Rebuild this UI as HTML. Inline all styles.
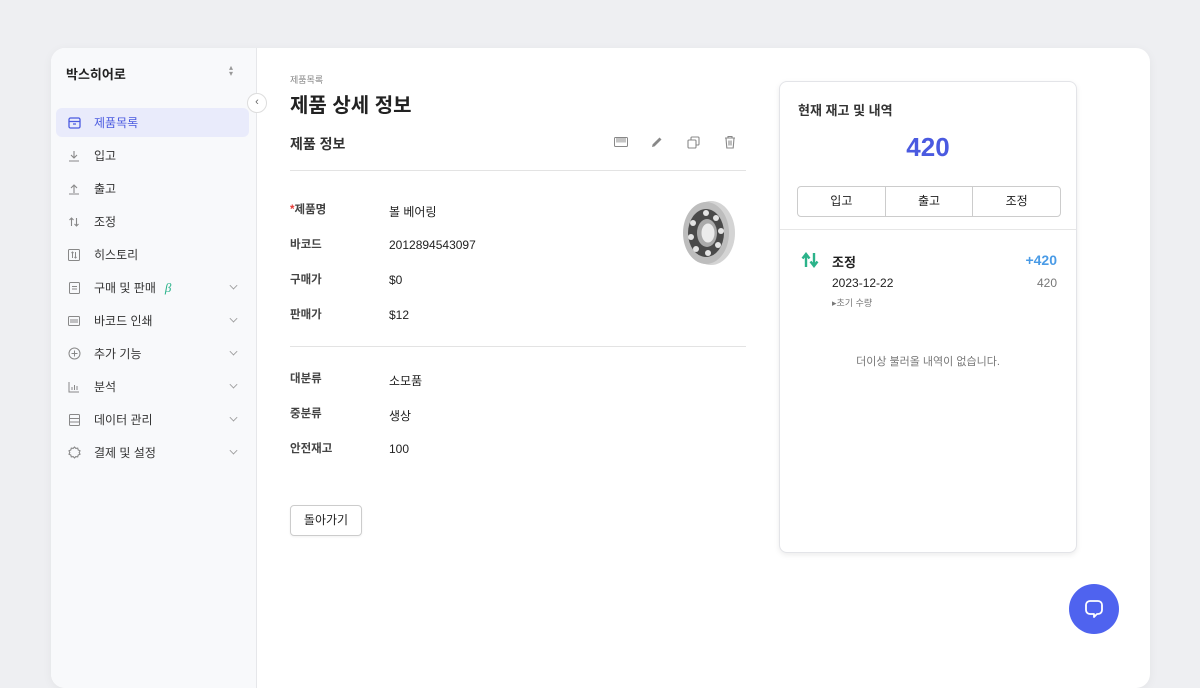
<!DOCTYPE html>
<html><head><meta charset="utf-8"><style>
*{box-sizing:border-box;margin:0;padding:0}
body{width:1200px;height:660px;background:#eeeff2;font-family:"Liberation Sans","Noto Sans CJK KR",sans-serif;color:#222;position:relative;overflow:hidden}
.app{position:absolute;left:51px;top:48px;width:1099px;height:640px;background:#fff;border-radius:14px;overflow:hidden;box-shadow:0 2px 10px rgba(0,0,0,.05)}
.side{position:absolute;left:0;top:0;width:206px;height:100%;background:#f8f9fb;border-right:1px solid #e6e7ea}
.brand{position:absolute;left:15px;top:16px;font-size:13px;font-weight:700}
.sort{position:absolute;left:178px;top:17px;font-size:8px;color:#999;line-height:6px}
.item{position:absolute;left:5px;width:193px;height:29px;border-radius:6px;font-size:12px;display:flex;align-items:center;padding-left:11px;color:#333}
.item .ic{width:14px;height:14px;margin-right:13px;display:flex;align-items:center;justify-content:center;color:#888}
.item.on{background:#e9ebfb;color:#4a5ae0}
.item.on .ic{color:#4a5ae0}
.chev{position:absolute;right:12px;top:9px;width:7px;height:7px;border-right:1.2px solid #999;border-bottom:1.2px solid #999;transform:rotate(45deg) scale(.8)}
.coll{position:absolute;left:196px;top:45px;width:20px;height:20px;border:1px solid #ddd;border-radius:50%;background:#fff;font-size:11px;color:#666;text-align:center;line-height:17px}
.abs{position:absolute}
.lbl{position:absolute;font-size:11.5px;font-weight:700;color:#444}
.val{position:absolute;font-size:12px;color:#222}
.card{position:absolute;left:728px;top:33px;width:298px;height:472px;border:1px solid #e3e4e8;border-radius:8px;box-shadow:0 2px 6px rgba(0,0,0,.08);background:#fff}
.btns{position:absolute;left:17px;top:104px;width:264px;height:31px;border:1px solid #ccc;border-radius:4px;display:flex}
.btns div{flex:1;text-align:center;line-height:29px;font-size:12px;border-right:1px solid #ccc}
.btns div:last-child{border-right:none}
</style></head><body>
<div class="app">
 <div class="side">
  <div class="brand">박스히어로</div>
  <div class="sort">▴<br>▾</div>
  <div class="item on" style="top:60px"><span class="ic"><svg width="13" height="12" viewBox="0 0 13 12" fill="none" stroke="currentColor" stroke-width="1.3"><rect x="1" y="1" width="11" height="10" rx="1.5"/><path d="M1 4.5h11M5 7h3"/></svg></span>제품목록</div>
  <div class="item" style="top:93px"><span class="ic"><svg width="12" height="12" fill="none" stroke="currentColor" stroke-width="1.1"><path d="M6 1v7M3 5l3 3 3-3M1 11h10"/></svg></span>입고</div>
  <div class="item" style="top:126px"><span class="ic"><svg width="12" height="12" fill="none" stroke="currentColor" stroke-width="1.1"><path d="M6 10V3M3 5l3-3 3 3M1 11h10"/></svg></span>출고</div>
  <div class="item" style="top:159px"><span class="ic"><svg width="12" height="12" fill="none" stroke="currentColor" stroke-width="1.1"><path d="M3.5 10V2M1.5 4l2-2 2 2M8.5 2v8M6.5 8l2 2 2-2"/></svg></span>조정</div>
  <div class="item" style="top:192px"><span class="ic"><svg width="12" height="12" fill="none" stroke="currentColor" stroke-width="1"><rect x=".5" y=".5" width="11" height="11" rx="1"/><path d="M4.5 9V3M3.5 4l1-1 1 1M7.5 3v6M6.5 8l1 1 1-1"/></svg></span>히스토리</div>
  <div class="item" style="top:225px"><span class="ic"><svg width="11" height="12" fill="none" stroke="currentColor" stroke-width="1"><rect x=".5" y=".5" width="10" height="11" rx="1"/><path d="M3 4.5h5M3 7h5"/></svg></span>구매 및 판매<span style="color:#2bb38a;font-style:italic;font-family:'Liberation Serif',serif;margin-left:9px;font-size:13px">β</span><span class="chev"></span></div>
  <div class="item" style="top:258px"><span class="ic"><svg width="12" height="10" fill="none" stroke="currentColor" stroke-width="1"><rect x=".5" y=".5" width="11" height="9" rx="1"/><path d="M3 3v4M5 3v4M7 3v4M9 3v4"/></svg></span>바코드 인쇄<span class="chev"></span></div>
  <div class="item" style="top:291px"><span class="ic"><svg width="13" height="13" fill="none" stroke="currentColor" stroke-width="1"><circle cx="6.5" cy="6.5" r="5.5"/><path d="M6.5 3.5v6M3.5 6.5h6"/></svg></span>추가 기능<span class="chev"></span></div>
  <div class="item" style="top:324px"><span class="ic"><svg width="12" height="12" fill="none" stroke="currentColor" stroke-width="1"><path d="M1 1v10h10M4 9V6M6.5 9V4M9 9V5"/></svg></span>분석<span class="chev"></span></div>
  <div class="item" style="top:357px"><span class="ic"><svg width="11" height="12" fill="none" stroke="currentColor" stroke-width="1"><rect x=".5" y=".5" width="10" height="11" rx="1"/><path d="M.5 4.5h10M.5 8h10"/></svg></span>데이터 관리<span class="chev"></span></div>
  <div class="item" style="top:390px"><span class="ic"><svg width="13" height="13" fill="none" stroke="currentColor" stroke-width="1.1"><path d="M6.5 1l1.3 1.4 1.9-.3.5 1.9 1.8.8-.8 1.7.8 1.7-1.8.8-.5 1.9-1.9-.3L6.5 12 5.2 10.6l-1.9.3-.5-1.9L1 8.2 1.8 6.5 1 4.8 2.8 4l.5-1.9 1.9.3z"/></svg></span>결제 및 설정<span class="chev"></span></div>
 </div>
 <div class="coll">‹</div>

 <div class="abs" style="left:239px;top:25px;font-size:9px;color:#888">제품목록</div>
 <div class="abs" style="left:239px;top:41px;font-size:20px;font-weight:700;color:#222">제품 상세 정보</div>
 <div class="abs" style="left:239px;top:86px;font-size:14px;font-weight:700;color:#333">제품 정보</div>
 <svg class="abs" style="left:563px;top:88px" width="14" height="12" fill="none" stroke="#888" stroke-width="1"><rect x=".5" y="1.5" width="13" height="9" rx="1"/><path d="M3 1.5v5M5 1.5v5M7 1.5v5M9 1.5v5M11 1.5v5"/></svg>
 <svg class="abs" style="left:600px;top:88px" width="12" height="12" fill="#888"><path d="M1 11l.6-2.6L8.5 1.5l2 2L3.6 10.4z"/></svg>
 <svg class="abs" style="left:636px;top:88px" width="13" height="13" fill="none" stroke="#888" stroke-width="1.1"><rect x="1" y="4" width="8" height="8" rx="1"/><path d="M4 4V2a1 1 0 011-1h6a1 1 0 011 1v6a1 1 0 01-1 1H9"/></svg>
 <svg class="abs" style="left:673px;top:87px" width="12" height="14" fill="none" stroke="#888" stroke-width="1.1"><path d="M1 3h10M4 3V1.5h4V3M2 3l.8 10h6.4L10 3M5 5.5v5M7 5.5v5"/></svg>
 <div class="abs" style="left:239px;top:122px;width:456px;height:1px;background:#e3e3e3"></div>
 <div class="lbl" style="left:239px;top:153px"><span style="color:#e53935">*</span>제품명</div><div class="val" style="left:338px;top:155px">볼 베어링</div>
 <div class="lbl" style="left:239px;top:188px">바코드</div><div class="val" style="left:338px;top:190px">2012894543097</div>
 <div class="lbl" style="left:239px;top:223px">구매가</div><div class="val" style="left:338px;top:225px">$0</div>
 <div class="lbl" style="left:239px;top:258px">판매가</div><div class="val" style="left:338px;top:260px">$12</div>
 <svg class="abs" style="left:624px;top:150px" width="64" height="70" viewBox="0 0 64 70">
  <ellipse cx="36" cy="35" rx="24" ry="32" fill="#d4d4d4"/>
  <ellipse cx="31" cy="35" rx="23" ry="31" fill="#bdbdbd"/>
  <ellipse cx="31" cy="35" rx="18" ry="24" fill="#4a4a4a"/>
  <g fill="#e4e4e4"><circle cx="31" cy="15" r="3"/><circle cx="41" cy="20" r="3"/><circle cx="46" cy="33" r="3"/><circle cx="43" cy="47" r="3"/><circle cx="33" cy="55" r="3"/><circle cx="21" cy="51" r="3"/><circle cx="16" cy="39" r="3"/><circle cx="18" cy="25" r="3"/></g>
  <ellipse cx="32" cy="35" rx="10" ry="14" fill="#aaa"/><ellipse cx="33" cy="35" rx="6.5" ry="9.5" fill="#ececec"/>
 </svg>
 <div class="abs" style="left:239px;top:298px;width:456px;height:1px;background:#e3e3e3"></div>
 <div class="lbl" style="left:239px;top:322px">대분류</div><div class="val" style="left:338px;top:324px">소모품</div>
 <div class="lbl" style="left:239px;top:357px">중분류</div><div class="val" style="left:338px;top:359px">생상</div>
 <div class="lbl" style="left:239px;top:392px">안전재고</div><div class="val" style="left:338px;top:394px">100</div>
 <div class="abs" style="left:239px;top:457px;width:72px;height:31px;border:1px solid #ccc;border-radius:4px;font-size:12px;text-align:center;line-height:29px;box-shadow:0 1px 2px rgba(0,0,0,.06)">돌아가기</div>

 <div class="card">
  <div class="abs" style="left:18px;top:18px;font-size:13px;font-weight:700;color:#333">현재 재고 및 내역</div>
  <div class="abs" style="left:0;width:100%;top:50px;text-align:center;font-size:26px;font-weight:700;color:#4a5ae0">420</div>
  <div class="btns"><div>입고</div><div>출고</div><div>조정</div></div>
  <div class="abs" style="left:0;top:147px;width:100%;height:1px;background:#e6e6e6"></div>
  <svg class="abs" style="left:21px;top:170px" width="18" height="16"><path d="M5 15V4M1.5 6.5L5 2l3.5 4.5" stroke="#2bb38a" stroke-width="2.4" fill="none"/><path d="M13 1v11M9.5 9.5L13 14l3.5-4.5" stroke="#2bb38a" stroke-width="2.4" fill="none"/></svg>
  <div class="abs" style="left:52px;top:170px;font-size:13px;font-weight:700">조정</div>
  <div class="abs" style="right:19px;top:170px;font-size:14px;font-weight:700;color:#4a9be6">+420</div>
  <div class="abs" style="left:52px;top:194px;font-size:12px">2023-12-22</div>
  <div class="abs" style="right:19px;top:194px;font-size:12px;color:#777">420</div>
  <div class="abs" style="left:52px;top:214px;font-size:9px;color:#777">▸초기 수량</div>
  <div class="abs" style="left:0;width:100%;top:271px;text-align:center;font-size:11px;color:#777">더이상 불러올 내역이 없습니다.</div>
 </div>
 <div class="abs" style="left:1018px;top:536px;width:50px;height:50px;border-radius:50%;background:#4f63ef">
  <svg style="position:absolute;left:15px;top:15px" width="20" height="20" fill="none" stroke="#fff" stroke-width="1.8"><path d="M6 2h8a4 4 0 014 4v5a4 4 0 01-4 4h-1l-3 3v-3H6a4 4 0 01-4-4V6a4 4 0 014-4z" stroke-linejoin="round"/></svg>
 </div>
</div>
</body></html>
